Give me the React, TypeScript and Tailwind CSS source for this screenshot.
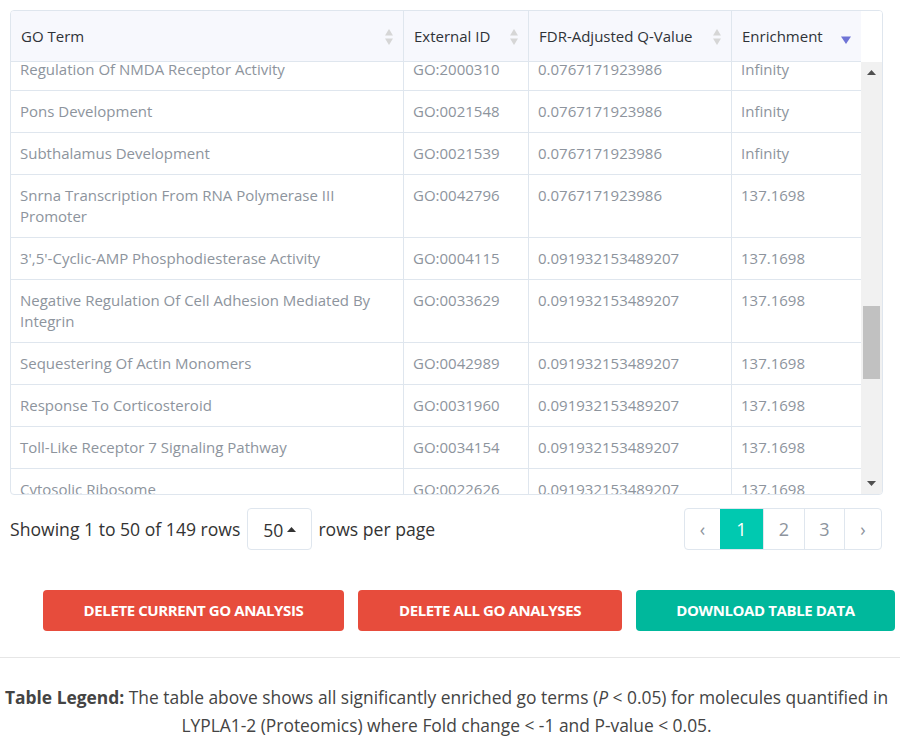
import React from "react";

type Row = { term: string; id: string; q: string; enrichment: string };

const ROWS: Row[] = [
  { term: "Regulation Of NMDA Receptor Activity", id: "GO:2000310", q: "0.0767171923986", enrichment: "Infinity" },
  { term: "Pons Development", id: "GO:0021548", q: "0.0767171923986", enrichment: "Infinity" },
  { term: "Subthalamus Development", id: "GO:0021539", q: "0.0767171923986", enrichment: "Infinity" },
  { term: "Snrna Transcription From RNA Polymerase III Promoter", id: "GO:0042796", q: "0.0767171923986", enrichment: "137.1698" },
  { term: "3',5'-Cyclic-AMP Phosphodiesterase Activity", id: "GO:0004115", q: "0.091932153489207", enrichment: "137.1698" },
  { term: "Negative Regulation Of Cell Adhesion Mediated By Integrin", id: "GO:0033629", q: "0.091932153489207", enrichment: "137.1698" },
  { term: "Sequestering Of Actin Monomers", id: "GO:0042989", q: "0.091932153489207", enrichment: "137.1698" },
  { term: "Response To Corticosteroid", id: "GO:0031960", q: "0.091932153489207", enrichment: "137.1698" },
  { term: "Toll-Like Receptor 7 Signaling Pathway", id: "GO:0034154", q: "0.091932153489207", enrichment: "137.1698" },
  { term: "Cytosolic Ribosome", id: "GO:0022626", q: "0.091932153489207", enrichment: "137.1698" },
];

const cols = "grid grid-cols-[393px_125px_203px_129px]";

function SortIcon() {
  return (
    <svg width="10" height="18" viewBox="0 0 10 18" className="shrink-0">
      <path d="M5 1 L9 7.5 L1 7.5 Z" fill="#d6d6d6" />
      <path d="M5 17 L9 10.5 L1 10.5 Z" fill="#d6d6d6" />
    </svg>
  );
}

function SortDesc() {
  return (
    <svg width="12" height="10" viewBox="0 0 12 10" className="mt-[6px] shrink-0">
      <path d="M1 1.5 L11 1.5 L6 9 Z" fill="#6f74d6" />
    </svg>
  );
}

function HeaderCell({ label, active, last }: { label: string; active?: boolean; last?: boolean }) {
  return (
    <div
      className={`flex h-[51px] items-center justify-between pl-[10px] pr-[9px] ${last ? "" : "border-r border-[#dfe6ee]"}`}
    >
      <span>{label}</span>
      {active ? <SortDesc /> : <SortIcon />}
    </div>
  );
}

function Scrollbar() {
  return (
    <div className="flex w-[21px] flex-col items-center bg-[#f1f1f1]">
      <div className="flex h-[21px] w-full items-center justify-center">
        <svg width="9" height="5" viewBox="0 0 9 5">
          <path d="M4.5 0 L9 5 L0 5 Z" fill="#505050" />
        </svg>
      </div>
      <div className="h-[223px]" />
      <div className="h-[73px] w-[17px] bg-[#c1c1c1]" />
      <div className="flex-1" />
      <div className="flex h-[21px] w-full items-center justify-center">
        <svg width="9" height="5" viewBox="0 0 9 5">
          <path d="M0 0 L9 0 L4.5 5 Z" fill="#505050" />
        </svg>
      </div>
    </div>
  );
}

function ResultsTable() {
  return (
    <div className="w-[873px] overflow-hidden rounded-[4px] border border-[#dfe6ee]">
      <div className="flex h-[51px]">
        <div className={`${cols} w-[850px] border-b border-[#dfe6ee] bg-[#f7f8fd] text-[15px] text-[#2f3338]`}>
          <HeaderCell label="GO Term" />
          <HeaderCell label="External ID" />
          <HeaderCell label="FDR-Adjusted Q-Value" />
          <HeaderCell label="Enrichment" active last />
        </div>
        <div className="flex-1 bg-white" />
      </div>
      <div className="flex h-[432px]">
        <div className="h-full w-[850px] overflow-hidden">
          <div className="-mt-[13px] text-[15px] leading-[21px] text-[#8d949d]">
            {ROWS.map((row) => (
              <div key={row.id} className={`${cols} border-b border-[#dfe6ee]`}>
                <div className="border-r border-[#dfe6ee] py-[10px] pl-[9px] pr-[20px]">{row.term}</div>
                <div className="border-r border-[#dfe6ee] py-[10px] pl-[9px]">{row.id}</div>
                <div className="border-r border-[#dfe6ee] py-[10px] pl-[9px]">{row.q}</div>
                <div className="py-[10px] pl-[9px]">{row.enrichment}</div>
              </div>
            ))}
          </div>
        </div>
        <Scrollbar />
      </div>
    </div>
  );
}

function Pagination() {
  const pageBtn = "flex h-full items-center justify-center border-l border-[#dfe6ee]";
  return (
    <div className="flex h-[42px] overflow-hidden rounded-[4px] border border-[#dfe6ee] text-[18px] text-[#8d949d]">
      <div className="flex h-full w-[35px] items-center justify-center">‹</div>
      <div className="flex h-full w-[43px] items-center justify-center bg-[#00c9b0] text-white">1</div>
      <div className={`${pageBtn} w-[41px]`}>2</div>
      <div className={`${pageBtn} w-[40px]`}>3</div>
      <div className={`${pageBtn} w-[37px]`}>›</div>
    </div>
  );
}

export default function App() {
  return (
    <div className="min-h-[743px] bg-white font-['Open_Sans',sans-serif]">
      <div className="pl-[10px] pt-[10px]">
        <ResultsTable />
        <div className="mt-[13px] flex w-[872px] items-center justify-between">
          <div className="flex items-center text-[17.6px] text-[#333]">
            <span>Showing 1 to 50 of 149 rows</span>
            <div className="ml-[7px] mr-[6px] flex h-[42px] w-[65px] items-center justify-center gap-[4px] rounded-[4px] border border-[#dfe6ee]">
              <span className="pt-[2px]">50</span>
              <svg width="9" height="5" viewBox="0 0 9 5">
                <path d="M4.5 0 L9 5 L0 5 Z" fill="#333" />
              </svg>
            </div>
            <span>rows per page</span>
          </div>
          <Pagination />
        </div>
      </div>

      <div className="mt-[40px] flex justify-end gap-[14px] pr-[5px] text-[15px] font-bold tracking-[-0.4px] text-white">
        <button type="button" className="flex h-[41px] w-[301px] items-center justify-center rounded-[4px] bg-[#e74c3c]">
          DELETE CURRENT GO ANALYSIS
        </button>
        <button type="button" className="flex h-[41px] w-[264px] items-center justify-center rounded-[4px] bg-[#e74c3c]">
          DELETE ALL GO ANALYSES
        </button>
        <button type="button" className="flex h-[41px] w-[259px] items-center justify-center rounded-[4px] bg-[#00b89c]">
          DOWNLOAD TABLE DATA
        </button>
      </div>

      <div className="mt-[26px] border-t border-[#e6e6e6]" />

      <p className="mt-[25px] pr-[7px] text-center text-[17.4px] leading-[28px] text-[#444]">
        <span className="font-bold">Table Legend:</span> The table above shows all significantly enriched go terms (<i>P</i>&nbsp;&lt; 0.05) for molecules quantified in LYPLA1-2 (Proteomics) where Fold change &lt; -1 and P-value &lt; 0.05.
      </p>
    </div>
  );
}
